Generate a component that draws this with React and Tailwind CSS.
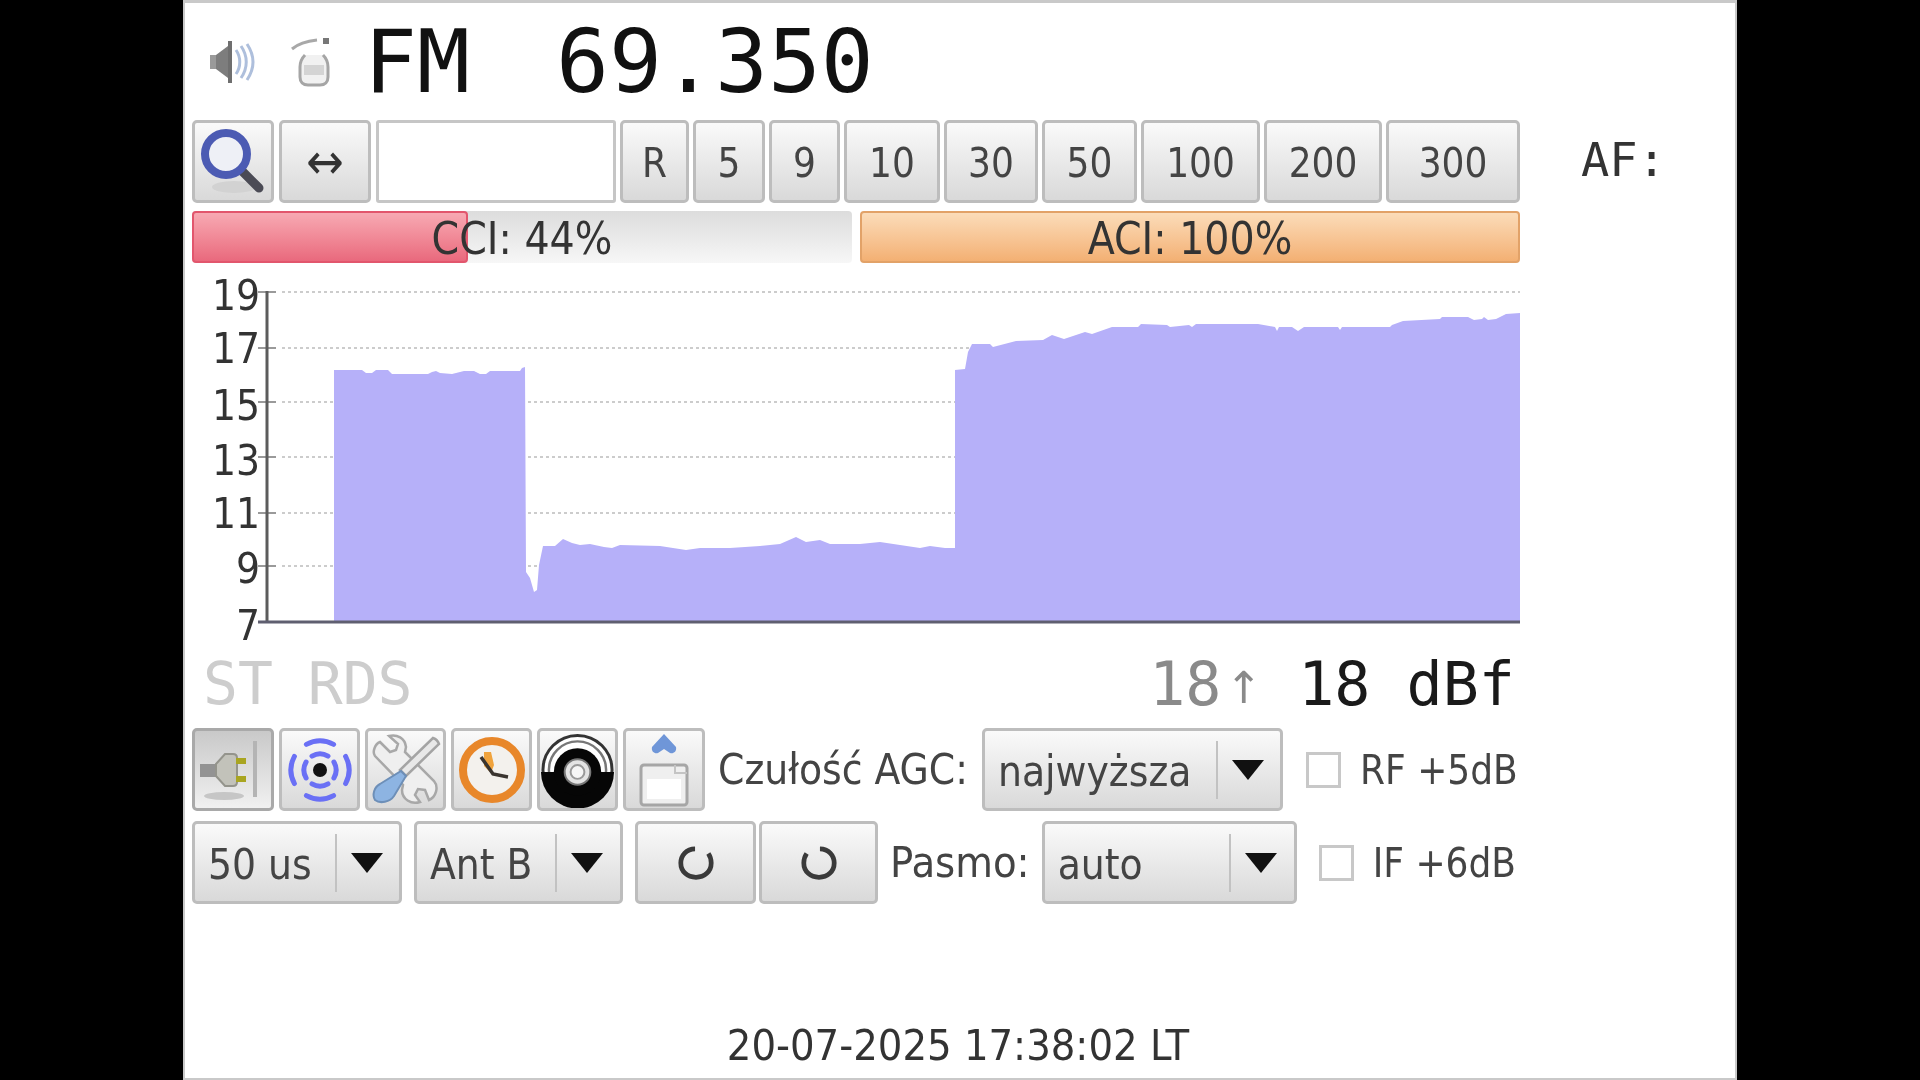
import React from 'react';

const sans = "font-['DejaVu_Sans',sans-serif] [font-stretch:condensed]";
const mono = "font-['DejaVu_Sans_Mono',monospace]";
const btnBase = 'flex items-center justify-center rounded-[5px] border-[3px] border-[#bdbdbd] bg-gradient-to-b from-[#fafafa] to-[#d9d9d9] text-[#444]';

// Signal history, traced from the plot in page coordinates
const signal = [
  [334, 622], [334, 370], [362, 370], [366, 373], [372, 373], [376, 370], [388, 370], [392, 374], [428, 374],
  [432, 372], [436, 371], [440, 373], [452, 374], [464, 371], [474, 371], [480, 374], [486, 374], [490, 371],
  [520, 371], [522, 368], [525, 367], [526, 572], [530, 578], [534, 592], [537, 590], [539, 565], [543, 546],
  [555, 546], [563, 539], [572, 543], [580, 545], [590, 544], [604, 547], [612, 548], [620, 545], [660, 546],
  [686, 550], [700, 548], [730, 548], [760, 546], [780, 544], [796, 537], [806, 542], [820, 540], [830, 544],
  [860, 544], [880, 542], [900, 545], [920, 548], [930, 546], [945, 548], [955, 548], [955, 370], [965, 369],
  [968, 352], [972, 344], [990, 344], [993, 347], [1016, 341], [1043, 340], [1052, 335], [1058, 337], [1064, 339],
  [1085, 332], [1092, 334], [1112, 327], [1138, 327], [1141, 324], [1167, 325], [1170, 327], [1189, 325], [1192, 327],
  [1196, 324], [1258, 324], [1275, 327], [1277, 331], [1279, 327], [1292, 327], [1298, 331], [1304, 327], [1338, 327],
  [1340, 330], [1342, 327], [1390, 327], [1392, 325], [1403, 321], [1440, 319], [1442, 317], [1468, 317], [1474, 320],
  [1482, 319], [1484, 317], [1488, 320], [1496, 319], [1506, 314], [1520, 313], [1520, 622],
];

const gridLines = [292, 348, 402, 457, 513, 566];
const yLabels = [['19', 310], ['17', 363], ['15', 420], ['13', 475], ['11', 528], ['9', 583], ['7', 640]];

const SignalChart = () => (
  <svg className="block w-[1328px] h-[380px]" viewBox="192 270 1328 380">
    {gridLines.map((y) => (
      <g key={y}>
        <line x1="282" x2="1520" y1={y} y2={y} stroke="#cccccc" strokeWidth="2" strokeDasharray="3 3" />
        <line x1="258" x2="276" y1={y} y2={y} stroke="#9a9a9a" strokeWidth="2" />
      </g>
    ))}
    <polygon points={signal.map((p) => p.join(',')).join(' ')} fill="#b6b0f9" />
    <line x1="267" x2="267" y1="291" y2="623" stroke="#5c5c5c" strokeWidth="3" />
    <line x1="258" x2="1520" y1="622" y2="622" stroke="#5f5f70" strokeWidth="3" />
    {yLabels.map(([label, y]) => (
      <text key={label} x="260" y={y} textAnchor="end" fontSize="42" fill="#333" className={sans}>{label}</text>
    ))}
  </svg>
);

const SearchIcon = () => (
  <svg width="70" height="70" viewBox="0 0 70 70">
    <ellipse cx="36" cy="60" rx="22" ry="6" fill="#d2d2d2" />
    <line x1="44" y1="44" x2="61" y2="61" stroke="#4b4b55" strokeWidth="9" strokeLinecap="round" />
    <circle cx="28" cy="27" r="21" fill="#eef0f6" stroke="#4c5bb3" strokeWidth="8" />
  </svg>
);

const SpeakerIcon = () => (
  <svg width="52" height="48" viewBox="0 0 52 48">
    <path d="M2 17h8v14H2z" fill="#9a9a9a" />
    <path d="M8 17 20 8v32L8 31z" fill="#7d7d7d" />
    <path d="M20 3h4v42h-4z" fill="#6f6f6f" />
    <path d="M28 12c5 7 5 17 0 24M33 8c7 10 7 22 0 32M39 6c8 12 8 24 0 36" fill="none" stroke="#aebfdc" strokeWidth="3" />
  </svg>
);

const BottleIcon = () => (
  <svg width="44" height="50" viewBox="0 0 44 50">
    <path d="M1 12C8 6 16 4 26 3" fill="none" stroke="#a8a8a8" strokeWidth="3" />
    <rect x="32" y="1" width="6" height="6" fill="#777" />
    <path d="M14 18c-3 3-5 7-5 12v10c0 5 3 8 8 8h12c5 0 8-3 8-8V30c0-5-2-9-5-12" fill="#f1f1f1" stroke="#a5a5a5" strokeWidth="3" />
    <rect x="13" y="28" width="20" height="10" fill="#d4d4d4" />
  </svg>
);

const PlugIcon = () => (
  <svg width="70" height="70" viewBox="0 0 70 70">
    <rect x="55" y="6" width="4" height="56" fill="#b4b4b4" />
    <ellipse cx="26" cy="61" rx="20" ry="4" fill="#c6c6c6" />
    <rect x="2" y="29" width="18" height="13" fill="#939393" />
    <path d="M18 29 27 19h8c3 0 4 2 4 4v24c0 2-1 4-4 4h-8l-9-10z" fill="#c2c2ba" stroke="#94948c" strokeWidth="2" />
    <rect x="38" y="23" width="10" height="6" fill="#a9a521" />
    <rect x="38" y="41" width="10" height="6" fill="#a9a521" />
  </svg>
);

const RadarIcon = () => (
  <svg width="70" height="70" viewBox="0 0 70 70" fill="none" stroke="#6a70f5" strokeLinecap="round">
    <circle cx="35" cy="35" r="7" fill="#111" stroke="none" />
    <g strokeWidth="5">
      <path d="M27 21.1A16 16 0 0 1 43 21.1M48.9 27A16 16 0 0 1 48.9 43M43 48.9A16 16 0 0 1 27 48.9M21.1 43A16 16 0 0 1 21.1 27" />
      <path d="M21.4 9.4A29 29 0 0 1 48.6 9.4M60.6 21.4A29 29 0 0 1 60.6 48.6M48.6 60.6A29 29 0 0 1 21.4 60.6M9.4 48.6A29 29 0 0 1 9.4 21.4" />
    </g>
  </svg>
);

const ToolsIcon = () => (
  <svg width="72" height="72" viewBox="0 0 72 72">
    <path d="M10 8 20 18l6-2 2-6L19 2c8-2 16 2 17 11l-1 5 29 29c5 6 2 16-5 19l-4-10-7-1-3 6 5 7c-9 3-18-3-18-12l1-5L5 22C2 18 5 10 10 8z" fill="#efefef" stroke="#a8a8a8" strokeWidth="2.5" />
    <path d="M63 4c3 1 5 3 6 6L36 42l-6-6z" fill="#e8e8e8" stroke="#a4a4a4" strokeWidth="2.5" />
    <path d="M31 37l5 5-12 20c-4 6-14 8-19 4-3-5-1-13 5-16z" fill="#8db4e2" stroke="#6d8fb8" strokeWidth="2" />
  </svg>
);

const ClockIcon = () => (
  <svg width="70" height="70" viewBox="0 0 70 70">
    <circle cx="35" cy="35" r="29" fill="#f3f1ed" stroke="#e8872a" strokeWidth="8" />
    <path d="M27 17v14l7 7 3-8-3-13z" fill="#f0a33c" />
    <path d="M24 22 36 39l15 3" fill="none" stroke="#3a3530" strokeWidth="3.5" />
  </svg>
);

const VinylIcon = () => (
  <svg width="76" height="76" viewBox="0 0 76 76">
    <circle cx="38" cy="38" r="35" fill="#fff" stroke="#333" strokeWidth="3" />
    <circle cx="38" cy="38" r="29" fill="none" stroke="#777" strokeWidth="2.5" />
    <path d="M1 40A37 37 0 0 0 75 40z" fill="#060606" />
    <circle cx="38" cy="40" r="24" fill="#060606" />
    <circle cx="38" cy="40" r="13" fill="#e4e4e4" stroke="#777" strokeWidth="2" />
    <circle cx="38" cy="40" r="7" fill="#f6f6f6" stroke="#999" strokeWidth="2" />
  </svg>
);

const UploadIcon = () => (
  <svg width="70" height="76" viewBox="0 0 70 76">
    <path d="M35 2 47 15c1 5-3 7-6 6l-6-4-6 4c-3 1-7-1-6-6z" fill="#6f96d8" />
    <rect x="12" y="33" width="46" height="40" rx="3" fill="#efefef" stroke="#a6a6a6" strokeWidth="3" />
    <rect x="18" y="47" width="34" height="20" fill="#fff" />
    <path d="M46 33v8h12" fill="none" stroke="#c4c4c4" strokeWidth="2" />
  </svg>
);

const RetuneIcon = ({ flip }) => (
  <svg width="38" height="38" viewBox="0 0 40 40" className={flip ? '-scale-x-100' : ''}>
    <path d="M19 5C10 5 4 12 4 20c0 9 7 15 16 15s16-6 16-15c0-4-1-7-3-10" fill="none" stroke="#3a3a3a" strokeWidth="5" />
  </svg>
);

const Caret = () => (
  <svg width="32" height="20" viewBox="0 0 32 20"><path d="M0 0h32L16 20z" fill="#111" /></svg>
);

// Combo box: the caret column and the thin divider sit inside the gradient box
const Select = ({ width, valueWidth, value }) => (
  <div className={`${btnBase} ${width} h-full !justify-start text-[42px] ${sans}`}>
    <div className={`${valueWidth} h-[58px] flex items-center pt-[3px] pl-[13px] border-r-2 border-[#c2c2c2]`}>{value}</div>
    <div className="flex-1 pr-[3px] flex items-center justify-center"><Caret /></div>
  </div>
);

const toolbar = [
  ['R', 'w-[69px]'], ['5', 'w-[72px]'], ['9', 'w-[71px]'], ['10', 'w-[96px]'], ['30', 'w-[94px]'],
  ['50', 'w-[95px]'], ['100', 'w-[119px]'], ['200', 'w-[118px]'], ['300', 'w-[134px]'],
];

const Checkbox = ({ label, className }) => (
  <div className={`flex items-center ${className}`}>
    <span className="w-[35px] h-[36px] border-[3px] border-[#c8c8c8] bg-white mr-[19px]" />
    <span className={`text-[40px] text-[#444] whitespace-nowrap ${sans}`}>{label}</span>
  </div>
);

const App = () => (
  <div className="min-h-screen bg-black flex justify-center overflow-hidden">
    <div className="w-[1554px] h-[1080px] flex flex-col bg-white border-x-[2px] border-t-[3px] border-b-[2px] border-[#c9c9c9] blur-[0.7px]">
      <div className="flex pl-[7px]">
        <div className="w-[1328px] flex flex-col">
          {/* Mode and frequency */}
          <div className="h-[117px] flex items-center pl-[16px]">
            <SpeakerIcon />
            <span className="ml-[31px]"><BottleIcon /></span>
            <span className={`ml-[29px] flex text-[88px] leading-none text-[#111] ${mono}`}>
              <span>FM</span>
              <span className="ml-[86px]">69.350</span>
            </span>
          </div>

          {/* Step buttons */}
          <div className={`h-[83px] flex gap-[4px] text-[40px] ${sans}`}>
            <div className={`${btnBase} w-[82px]`}><SearchIcon /></div>
            <div className={`${btnBase} w-[92px] ml-[1px]`}>
              <span className="text-[50px] leading-none text-[#333] font-['DejaVu_Sans',sans-serif]">↔</span>
            </div>
            <div className="w-[240px] ml-[1px] rounded-[3px] border-[3px] border-[#c6c6c6] bg-white" />
            {toolbar.map(([label, width]) => (
              <div key={label} className={`${btnBase} ${width} pt-[3px]`}>{label}</div>
            ))}
          </div>

          {/* Interference meters */}
          <div className={`h-[52px] mt-[8px] flex gap-[8px] text-[44px] text-[#333] ${sans}`}>
            <div className="relative w-[660px] pt-[3px] flex items-center justify-center rounded-[4px] bg-gradient-to-b from-[#dcdcdc] to-[#f7f7f7]">
              <div className="absolute left-0 top-0 bottom-0 w-[276px] rounded-[4px] border-2 border-[#e2566d] bg-gradient-to-b from-[#f7a9b3] to-[#e9697d]" />
              <span className="relative">CCI: 44%</span>
            </div>
            <div className="w-[660px] pt-[3px] flex items-center justify-center rounded-[4px] border-2 border-[#e2a268] bg-gradient-to-b from-[#fbdcb9] to-[#f3b073]">
              ACI: 100%
            </div>
          </div>

          <div className="mt-[7px]"><SignalChart /></div>

          {/* Stereo / RDS flags and signal level */}
          <div className={`h-[78px] pb-[10px] flex items-center justify-between pl-[11px] pr-[5px] leading-none ${mono}`}>
            <span className="text-[58px] text-[#cdcdcd]">ST RDS</span>
            <span className="flex items-center whitespace-pre text-[60px]">
              <span className="text-[#8a8a8a]">18</span>
              <span className="text-[44px] text-[#8a8a8a] mt-[8px] ml-[4px] font-['DejaVu_Sans',sans-serif]">↑</span>
              <span className="ml-[36px] text-[#1a1a1a]">18 dBf</span>
            </span>
          </div>

          {/* Tools row */}
          <div className="h-[83px] flex items-center">
            <div className="h-full flex gap-[5px]">
              <div className="w-[82px] flex items-center justify-center rounded-[5px] border-[3px] border-[#a9a9a9] bg-gradient-to-b from-[#c9c9c9] to-[#f1f1f1]"><PlugIcon /></div>
              <div className={`${btnBase} w-[81px]`}><RadarIcon /></div>
              <div className={`${btnBase} w-[81px]`}><ToolsIcon /></div>
              <div className={`${btnBase} w-[81px]`}><ClockIcon /></div>
              <div className={`${btnBase} w-[81px]`}><VinylIcon /></div>
              <div className={`${btnBase} w-[82px]`}><UploadIcon /></div>
            </div>
            <span className={`ml-[13px] text-[42px] text-[#444] whitespace-nowrap ${sans}`}>Czułość AGC:</span>
            <div className="ml-[14px] h-full"><Select width="w-[301px]" valueWidth="w-[233px]" value="najwyższa" /></div>
            <Checkbox className="ml-[23px]" label="RF +5dB" />
          </div>

          {/* Audio row */}
          <div className="h-[83px] mt-[10px] flex items-center">
            <Select width="w-[210px]" valueWidth="w-[142px]" value="50 us" />
            <div className="ml-[12px] h-full"><Select width="w-[209px]" valueWidth="w-[140px]" value="Ant B" /></div>
            <div className={`${btnBase} w-[121px] h-full ml-[12px]`}><RetuneIcon /></div>
            <div className={`${btnBase} w-[119px] h-full ml-[3px]`}><RetuneIcon flip /></div>
            <span className={`ml-[12px] text-[43px] text-[#444] ${sans}`}>Pasmo:</span>
            <div className="ml-[12px] h-full"><Select width="w-[255px]" valueWidth="w-[186px]" value="auto" /></div>
            <Checkbox className="ml-[22px]" label="IF +6dB" />
          </div>
        </div>

        <div className={`ml-[61px] mt-[133px] text-[47px] leading-none text-[#333] ${mono}`}>AF:</div>
      </div>

      <div className={`mt-[120px] pr-[4px] text-center text-[43px] leading-none text-[#333] ${sans}`}>20-07-2025 17:38:02 LT</div>
    </div>
  </div>
);

export default App;
